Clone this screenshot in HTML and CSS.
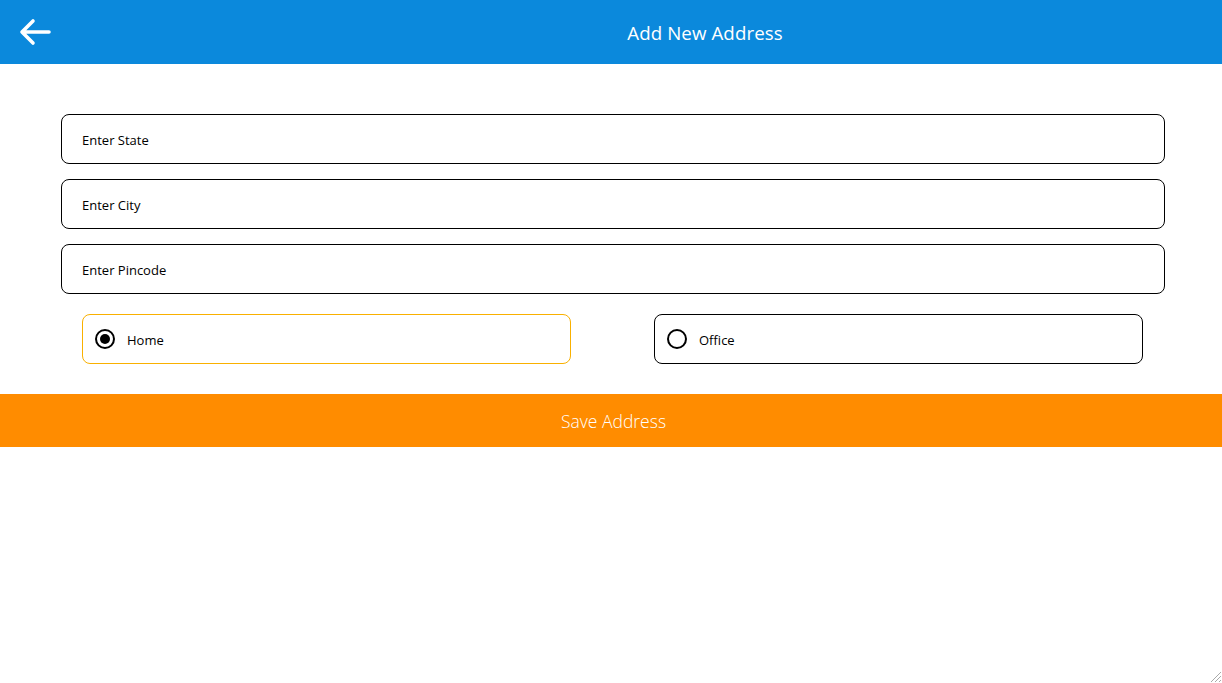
FILE: index.html
```html
<!DOCTYPE html>
<html>
<head>
<meta charset="utf-8">
<title>Add New Address</title>
<link rel="stylesheet" href="styles.css">
</head>
<body>
<header class="topbar">
  <button class="back" aria-label="Back">
    <svg width="32" height="28" viewBox="0 0 32 28"><path d="M30 14H4M14 3L3 14l11 11" fill="none" stroke="#fff" stroke-width="3.6" stroke-linecap="round" stroke-linejoin="round"/></svg>
  </button>
  <h1 class="title">Add New Address</h1>
</header>
<main class="content">
  <div class="fields">
    <div class="field">Enter State</div>
    <div class="field">Enter City</div>
    <div class="field">Enter Pincode</div>
  </div>
  <div class="choices">
    <label class="choice selected"><span class="radio checked"></span><span class="label">Home</span></label>
    <label class="choice"><span class="radio"></span><span class="label">Office</span></label>
  </div>
  <button class="save">Save Address</button>
</main>
<svg class="grip" width="12" height="12" viewBox="0 0 12 12"><path d="M11 1L1 11M11 5L5 11M11 9L9 11" stroke="#aaa" stroke-width="1"/></svg>
</body>
</html>
```
FILE: styles.css
```css
html, body { margin: 0; padding: 0; background: #fff; }
body { font-family: "Open Sans", "Noto Sans", sans-serif; color: #000; height: 683px; position: relative; overflow: hidden; }
.topbar { height: 64px; background: #0b89dc; display: flex; align-items: center; }
.back { background: none; border: 0; padding: 0; margin-left: 18px; width: 34px; height: 30px; display: flex; align-items: center; justify-content: center; }
.title { flex: 1; text-align: center; margin: 0; padding-left: 188px; padding-right: 52px; font-weight: 400; font-size: 18.7px; color: #fff; letter-spacing: 0.1px; }
.content { padding-top: 50px; }
.fields { margin-left: 61px; width: 1104px; display: flex; flex-direction: column; gap: 15px; }
.field { height: 47px; border: 1px solid #000; border-radius: 8px; display: flex; align-items: center; padding-left: 20px; padding-top: 1px; box-sizing: content-box; font-size: 13px; }
.choices { margin: 20px 79px 0 82px; display: grid; grid-template-columns: 1fr 1fr; column-gap: 83px; }
.choice { height: 48px; border: 1px solid #000; border-radius: 8px; display: flex; align-items: center; padding-left: 12px; font-size: 13px; gap: 12px; }
.choice .label { padding-top: 2px; }
.choice.selected { border-color: #f9b000; }
.radio { width: 16px; height: 16px; border: 2px solid #000; border-radius: 50%; box-sizing: content-box; display: flex; align-items: center; justify-content: center; }
.radio.checked::after { content: ""; width: 10px; height: 10px; border-radius: 50%; background: #000; }
.save { margin-top: 30px; width: 100%; height: 53px; border: 0; background: #ff8c00; color: #fff; font-family: "Open Sans", "Noto Sans", sans-serif; font-size: 17.5px; font-weight: 300; padding-left: 11px; }
.grip { position: absolute; right: 0; bottom: 0; }
```
